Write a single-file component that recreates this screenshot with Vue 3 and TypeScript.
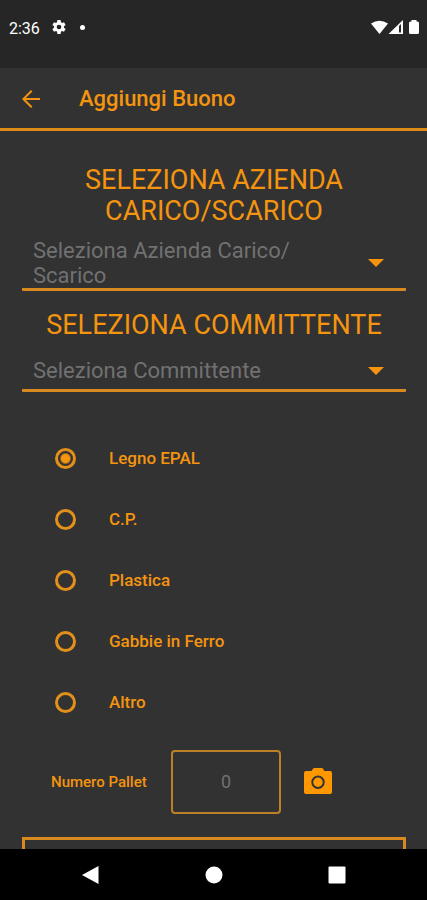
<script setup lang="ts">
import { ref } from 'vue'

interface PickerField {
  id: string
  title: string
  placeholder: string
  options: string[]
}

const pickers: PickerField[] = [
  {
    id: 'azienda',
    title: 'SELEZIONA AZIENDA CARICO/SCARICO',
    placeholder: 'Seleziona Azienda Carico/ Scarico',
    options: [],
  },
  {
    id: 'committente',
    title: 'SELEZIONA COMMITTENTE',
    placeholder: 'Seleziona Committente',
    options: [],
  },
]

const chosen = ref<Record<string, string>>({ azienda: '', committente: '' })

const materials: string[] = ['Legno EPAL', 'C.P.', 'Plastica', 'Gabbie in Ferro', 'Altro']
const material = ref<string>('Legno EPAL')
const palletCount = ref<string>('')
</script>

<template>
  <div class="screen">
    <div class="status">
      <span class="clock">2:36</span>
      <svg class="gear" viewBox="0 0 24 24" aria-hidden="true">
        <path
          fill-rule="evenodd"
          d="M19.4 13c.1-.3.1-.7.1-1s0-.7-.1-1l2.5-2-2.4-4.200-3 1.200c-.5-.4-1-.7-1.600-1L14.400 1.500H9.600L9.100 5c-.6.3-1.100.6-1.600 1l-3-1.200L2.100 9l2.500 2c-.1.3-.1.7-.1 1s0 .7.100 1l-2.500 2 2.400 4.200 3-1.200c.5.4 1 .7 1.600 1l.500 3.500h4.800l.500-3.500c.6-.3 1.100-.6 1.600-1l3 1.200 2.400-4.200zM12 15.500a3.500 3.500 0 1 1 0-7 3.500 3.500 0 0 1 0 7z"
        />
      </svg>
      <span class="dot"></span>
      <svg class="signals" viewBox="0 0 50 16" aria-hidden="true">
        <path d="M1 4.500Q9.500-1 18 4.500L9.500 15z" />
        <path fill-rule="evenodd" d="M33 1V15H18.500zM29 7v6.500h2V5z" />
        <path d="M39 4Q39 2.500 40.500 2.500H41.500V1h5v1.500h1Q49 2.500 49 4V13.500Q49 15 47.500 15h-7Q39 15 39 13.500z" />
      </svg>
    </div>

    <header class="bar">
      <button class="back" type="button" aria-label="Indietro">
        <svg viewBox="0 0 24 24" aria-hidden="true">
          <path d="M21 11H6.830l6.590-6.590L12 3l-9 9 9 9 1.410-1.410L6.830 13H21z" />
        </svg>
      </button>
      <h1>Aggiungi Buono</h1>
    </header>

    <main class="form">
      <section v-for="p in pickers" :key="p.id" class="picker">
        <label class="title" :for="p.id">{{ p.title }}</label>
        <div class="field">
          <span class="value">{{ chosen[p.id] || p.placeholder }}</span>
          <svg class="caret" viewBox="0 0 16 8" aria-hidden="true"><path d="M0 0h16L8 8z" /></svg>
          <select :id="p.id" v-model="chosen[p.id]">
            <option value=""></option>
            <option v-for="o in p.options" :key="o" :value="o">{{ o }}</option>
          </select>
        </div>
      </section>

      <div class="materials" role="radiogroup">
        <label v-for="m in materials" :key="m" class="material">
          <input v-model="material" type="radio" name="material" :value="m" />
          <span>{{ m }}</span>
        </label>
      </div>

      <div class="pallets">
        <label for="pallets">Numero Pallet</label>
        <input id="pallets" v-model="palletCount" type="text" inputmode="numeric" placeholder="0" />
        <button class="camera" type="button" aria-label="Fotocamera">
          <svg viewBox="0 0 28 28" aria-hidden="true">
            <path
              fill-rule="evenodd"
              d="M2 3H7.500L9 .700Q9.500 0 10.500 0h7q1 0 1.500.700L20.500 3H26q2 0 2 2V24q0 2-2 2H2q-2 0-2-2V5q0-2 2-2zM14 7.500a6.700 6.700 0 1 0 0 13.400 6.700 6.700 0 0 0 0-13.400z"
            />
            <circle cx="14" cy="14.200" r="4.700" />
          </svg>
        </button>
      </div>

      <div class="panel"></div>
    </main>

    <nav class="system">
      <button type="button" aria-label="Indietro di sistema">
        <svg viewBox="0 0 18 18" aria-hidden="true"><path d="M16.500 0v18L0 9z" /></svg>
      </button>
      <button type="button" aria-label="Home">
        <svg viewBox="0 0 18 18" aria-hidden="true"><circle cx="9" cy="9" r="8.500" /></svg>
      </button>
      <button type="button" aria-label="Recenti">
        <svg viewBox="0 0 18 18" aria-hidden="true"><rect x=".5" y=".5" width="17" height="17" rx="1" /></svg>
      </button>
    </nav>
  </div>
</template>

<style>
body {
  margin: 0;
  background: #323232;
}
</style>

<style scoped>
.screen {
  --accent: #f4940f;
  display: flex;
  flex-direction: column;
  height: 100vh;
  overflow: hidden;
  background: #323232;
  color: var(--accent);
  font-family: Roboto, 'Liberation Sans', sans-serif;
}

.screen * {
  box-sizing: border-box;
}

button {
  display: flex;
  align-items: center;
  justify-content: center;
  padding: 0;
  border: 0;
  background: none;
  color: inherit;
}

svg {
  display: block;
  fill: currentColor;
}

.status {
  display: flex;
  flex: none;
  align-items: center;
  height: 68px;
  padding: 0 7px 14px 9px;
  background: #262626;
  color: #fff;
}

.clock {
  padding-top: 3px;
  font-size: 16px;
  line-height: 20px;
}

.gear {
  width: 16px;
  height: 16px;
  margin-left: 11px;
}

.dot {
  width: 5px;
  height: 5px;
  margin-left: 13px;
  border-radius: 50%;
  background: currentColor;
}

.signals {
  width: 50px;
  height: 16px;
  margin-left: auto;
}

.bar {
  display: flex;
  flex: none;
  align-items: center;
  gap: 36px;
  height: 63px;
  padding: 2px 0 0 19px;
  border-bottom: 3px solid #de8c18;
}

.back svg {
  width: 24px;
  height: 24px;
}

h1 {
  margin: 0;
  font-size: 22px;
  font-weight: 500;
  line-height: 30px;
}

.form {
  flex: 1;
  min-height: 0;
  padding: 34px 21px 0 22px;
  overflow: hidden;
}

.picker {
  margin-bottom: 19px;
}

.title {
  display: block;
  padding: 0 16px;
  font-size: 27px;
  line-height: 31px;
  text-align: center;
}

.field {
  position: relative;
  display: flex;
  align-items: center;
  justify-content: space-between;
  min-height: 51px;
  padding: 11px 22px 0 11px;
  border-bottom: 3px solid #d98a1f;
  border-radius: 1px;
}

.value {
  max-width: 280px;
  color: #717171;
  font-size: 22px;
  line-height: 25px;
}

.caret {
  flex: none;
  width: 16px;
  height: 8px;
}

.field select {
  position: absolute;
  inset: 0;
  width: 100%;
  height: 100%;
  opacity: 0;
}

.materials {
  padding: 17px 0 0 33px;
}

.material {
  display: flex;
  align-items: center;
  gap: 33px;
  height: 61px;
  font-size: 17px;
  font-weight: 500;
  line-height: 24px;
}

.material span {
  padding-bottom: 2px;
}

.material input {
  flex: none;
  width: 21px;
  height: 21px;
  margin: 0;
  border: 3px solid #e3901a;
  border-radius: 50%;
  appearance: none;
}

.material input:checked {
  background: radial-gradient(circle, var(--accent) 4px, transparent 6px);
}

.pallets {
  display: flex;
  align-items: center;
  margin: 17px 0 23px;
  padding-left: 29px;
}

.pallets label {
  flex: none;
  width: 120px;
  font-size: 15px;
  font-weight: 500;
  line-height: 20px;
}

.pallets input {
  width: 110px;
  height: 64px;
  padding: 0 0 2px;
  border: 2px solid #bc8126;
  border-radius: 4px;
  background: none;
  color: var(--accent);
  font: 18px/24px Roboto, 'Liberation Sans', sans-serif;
  text-align: center;
}

.pallets input::placeholder {
  color: #717171;
  opacity: 1;
}

.camera {
  margin-left: 23px;
  color: #ff9800;
}

.camera svg {
  width: 28px;
  height: 28px;
}

.panel {
  min-height: 60px;
  border: 3px solid #d98a1f;
}

.system {
  display: flex;
  flex: none;
  align-items: center;
  justify-content: center;
  gap: 105px;
  height: 51px;
  background: #000;
  color: #fff;
}

.system svg {
  width: 18px;
  height: 18px;
}
</style>
